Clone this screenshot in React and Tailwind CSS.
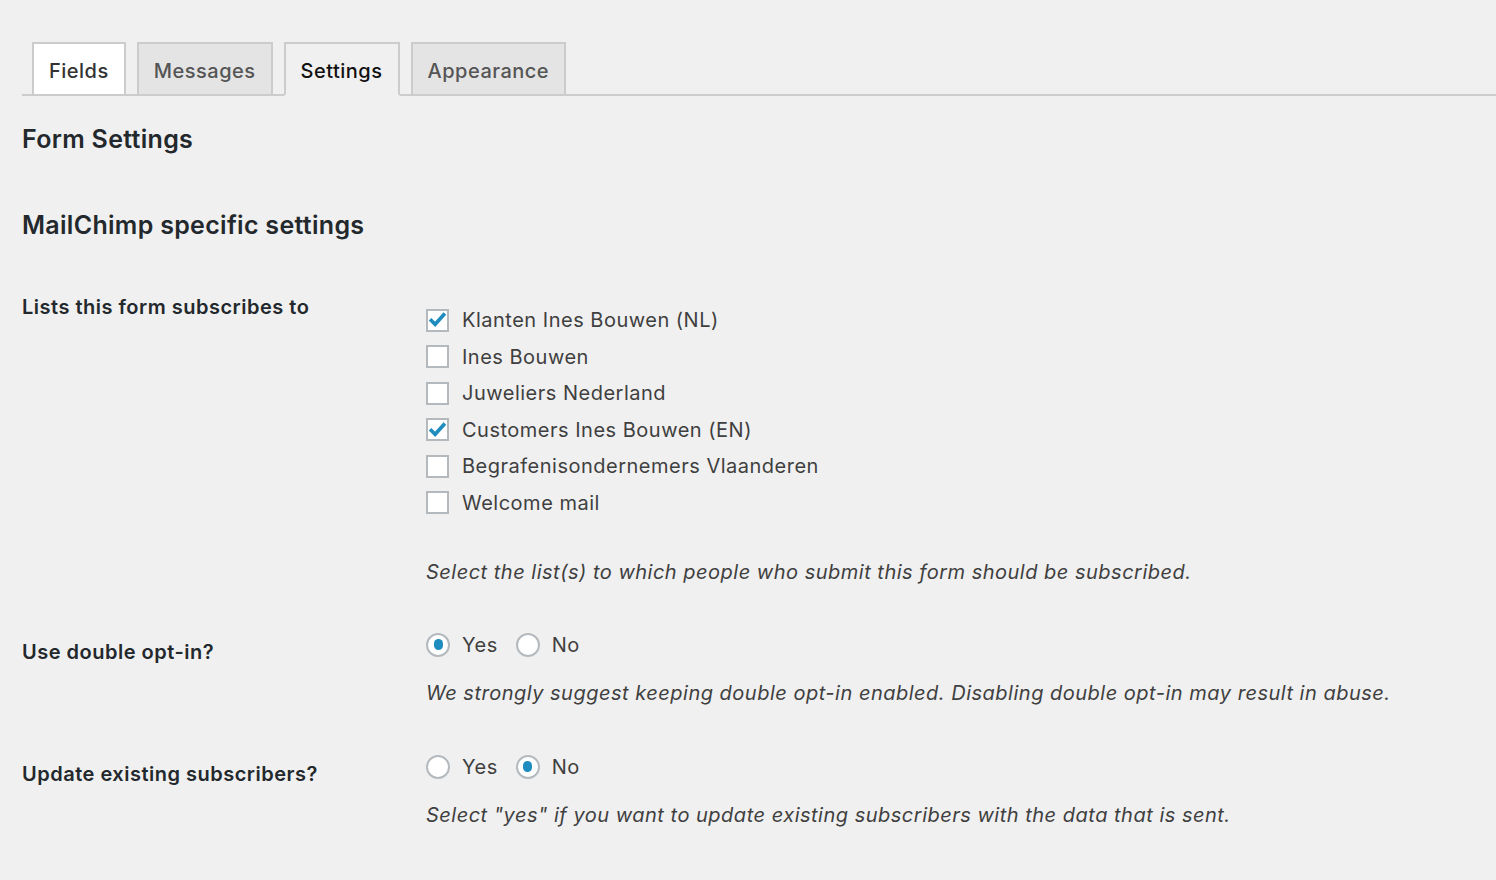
import React, { useState } from "react";

const tabs = ["Fields", "Messages", "Settings", "Appearance"];

const lists = [
  { name: "Klanten Ines Bouwen (NL)", checked: true },
  { name: "Ines Bouwen", checked: false },
  { name: "Juweliers Nederland", checked: false },
  { name: "Customers Ines Bouwen (EN)", checked: true },
  { name: "Begrafenisondernemers Vlaanderen", checked: false },
  { name: "Welcome mail", checked: false },
];

function Checkbox({ checked }) {
  return (
    <span className="w-[23px] h-[23px] bg-white border-2 border-[#b4b9be] flex items-center justify-center shrink-0">
      {checked && (
        <svg viewBox="0 0 20 20" className="w-[22px] h-[22px]">
          <path d="M3.5 10.5l4 4 9-10" fill="none" stroke="#1e8cbe" strokeWidth="3.8" strokeLinecap="square" />
        </svg>
      )}
    </span>
  );
}

function Radio({ checked, label }) {
  return (
    <label className="flex items-center gap-[12px]">
      <span className="w-[24px] h-[24px] rounded-full bg-white border-2 border-[#b4b9be] flex items-center justify-center shrink-0">
        {checked && <span className="w-[9px] h-[11px] rounded-full bg-[#1e8cbe]" />}
      </span>
      <span>{label}</span>
    </label>
  );
}

export default function App() {
  const [active] = useState("Settings");

  return (
    <div className="min-h-screen w-full bg-[#f0f0f0] text-[#3f3f3f] font-['Inter',sans-serif] text-[20px] tracking-[0.5px] overflow-hidden">
      {/* Tabs */}
      <div className="pt-[42px] pl-[22px]">
        <div className="flex items-end gap-[11px] pl-[10px] border-b-2 border-[#cccccc] h-[54px]">
          {tabs.map((t) => {
            const isActive = t === active;
            const base = "h-[54px] px-[15px] pt-[4px] flex items-center border-2 border-[#cccccc] -mb-[2px] leading-none";
            let cls = "bg-[#e4e4e4] text-[#555]";
            if (t === "Fields") cls = "bg-white text-[#333] border-b-[#cccccc]";
            if (isActive) cls = "bg-[#f0f0f0] text-[#111] border-b-[#f0f0f0]";
            return (
              <div key={t} className={`${base} ${cls} font-medium`}>
                {t}
              </div>
            );
          })}
        </div>
      </div>

      <div className="px-[22px]">
        <h2 className="mt-[28px] text-[25px] font-semibold text-[#23282d] leading-[30px] tracking-[0.3px]">Form Settings</h2>
        <h3 className="mt-[56px] text-[25px] font-semibold text-[#23282d] leading-[30px] tracking-[0.3px]">
          MailChimp specific settings
        </h3>

        {/* Settings rows */}
        <div className="grid grid-cols-[404px_1fr] mt-[54px]">
          <div className="font-semibold text-[#23282d] leading-[26px]">Lists this form subscribes to</div>
          <div className="pt-[14px]">
            <div className="flex flex-col gap-[12.5px]">
              {lists.map((l) => (
                <label key={l.name} className="flex items-center gap-[13px] leading-[24px]">
                  <Checkbox checked={l.checked} />
                  <span>{l.name}</span>
                </label>
              ))}
            </div>
            <p className="italic mt-[44px] leading-[26px]">
              Select the list(s) to which people who submit this form should be subscribed.
            </p>
          </div>

          <div className="font-semibold text-[#23282d] leading-[26px] mt-[54px]">Use double opt-in?</div>
          <div className="mt-[47px]">
            <div className="flex items-center gap-[18px] leading-[26px]">
              <Radio checked label="Yes" />
              <Radio label="No" />
            </div>
            <p className="italic mt-[22px] leading-[26px]">
              We strongly suggest keeping double opt-in enabled. Disabling double opt-in may result in abuse.
            </p>
          </div>

          <div className="font-semibold text-[#23282d] leading-[26px] mt-[55px]">Update existing subscribers?</div>
          <div className="mt-[48px]">
            <div className="flex items-center gap-[18px] leading-[26px]">
              <Radio label="Yes" />
              <Radio checked label="No" />
            </div>
            <p className="italic mt-[22px] leading-[26px]">
              Select "yes" if you want to update existing subscribers with the data that is sent.
            </p>
          </div>
        </div>
      </div>
    </div>
  );
}
